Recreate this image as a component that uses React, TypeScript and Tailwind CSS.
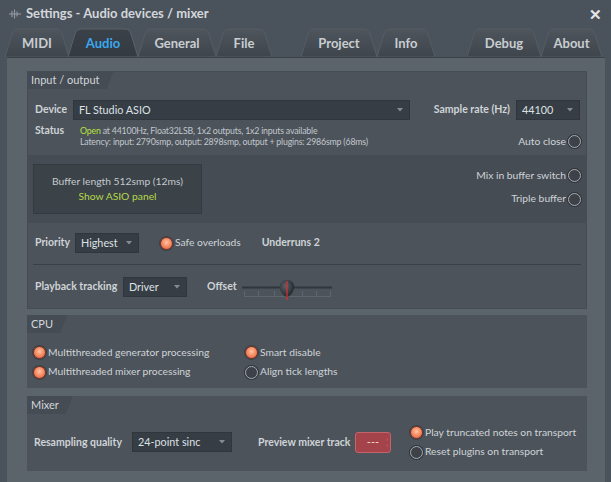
import React from "react";

const font = { fontFamily: "Lato, 'Noto Sans', sans-serif" };

function Tab({ label, w, active }: { label: string; w: number; active?: boolean }) {
  const h = 29;
  const d = `M0,${h} L7,6 Q8.5,1 13,1 L${w - 13},1 Q${w - 8.5},1 ${w - 7},6 L${w},${h} Z`;
  return (
    <div className="relative flex h-[29px] shrink-0 items-center justify-center" style={{ width: w }}>
      <svg className="absolute inset-0" width={w} height={h}>
        <defs>
          <linearGradient id={`g${label}`} x1="0" y1="0" x2="0" y2="1">
            <stop offset="0" stopColor={active ? "#3a4148" : "#4e555d"} />
            <stop offset="1" stopColor={active ? "#333a41" : "#3e454c"} />
          </linearGradient>
        </defs>
        <path d={d} fill={`url(#g${label})`} stroke={active ? "#5a626a" : "#555c64"} strokeWidth="1" />
      </svg>
      <span
        className={`relative mt-[2px] text-[13px] font-bold ${active ? "text-[#3aa8f0]" : "text-[#c9cdd1]"}`}
      >
        {label}
      </span>
    </div>
  );
}

function Radio({ on }: { on?: boolean }) {
  return on ? (
    <span className="inline-block h-[13px] w-[13px] shrink-0 rounded-full border border-[#7a3428] bg-[radial-gradient(circle_at_50%_40%,#ffc4a0_0%,#f58a62_50%,#d5593e_100%)] shadow-[0_0_0_1px_#3c4248]" />
  ) : (
    <span className="inline-block h-[13px] w-[13px] shrink-0 rounded-full border-[1.5px] border-[#a6acb2] bg-[#3c4248] shadow-[0_0_0_1px_#30353a]" />
  );
}

function Select({ text, className }: { text: string; className: string }) {
  return (
    <div
      className={`flex h-[20px] shrink-0 items-center justify-between border border-[#30363c] bg-[#363d44] pl-[5px] pr-[6px] text-[10.8px] text-[#dde1e4] ${className}`}
    >
      <span>{text}</span>
      <svg width="6" height="4" viewBox="0 0 6 4">
        <path d="M0,0 L6,0 L3,3.5 Z" fill="#858c93" />
      </svg>
    </div>
  );
}

function Header({ label }: { label: string }) {
  return (
    <div className="flex h-[18px] w-fit items-center bg-[#454c54] pl-[4px] pr-[14px] text-[11px] text-[#d2d6da] [clip-path:polygon(0_0,100%_0,calc(100%-7px)_100%,0_100%)]">
      {label}
    </div>
  );
}

function Slider() {
  const ticks = [0, 14, 30, 44, 58, 72, 86];
  return (
    <svg width="92" height="24" viewBox="0 0 92 24" className="shrink-0">
      <line x1="0" y1="9.5" x2="90" y2="9.5" stroke="#30363b" strokeWidth="2" />
      <line x1="2" y1="18.5" x2="88" y2="18.5" stroke="#5d656d" strokeWidth="1" />
      {ticks.map((t) => (
        <line key={t} x1={t + 2.5} y1="13" x2={t + 2.5} y2="19" stroke="#5d656d" strokeWidth="1" />
      ))}
      <defs>
        <radialGradient id="knob" cx="0.4" cy="0.35" r="0.7">
          <stop offset="0" stopColor="#5a6168" />
          <stop offset="1" stopColor="#1f2327" />
        </radialGradient>
      </defs>
      <path d="M45,2 C51,2 53,7 52,11 C51,15 48,18 45,19 C42,18 39,15 38,11 C37,7 39,2 45,2 Z" fill="url(#knob)" />
      <line x1="45" y1="3" x2="45" y2="22" stroke="#e03030" strokeWidth="1.2" />
    </svg>
  );
}

const lbl = "text-[10.5px] font-bold text-[#cfd3d7]";
const txt = "text-[10.3px] text-[#cfd3d7]";

export default function App() {
  return (
    <div className="h-[482px] w-[611px] overflow-hidden bg-[#4a525b]" style={font}>
      {/* Title bar */}
      <div className="flex h-[28px] items-center pl-[8px] pr-[9px]">
        <svg width="14" height="10" viewBox="0 0 14 10" className="mr-[4px]">
          <g stroke="#8e959c" strokeWidth="1.2">
            <line x1="1" y1="5" x2="13" y2="5" />
            <line x1="4" y1="2" x2="4" y2="8" />
            <line x1="6.5" y1="0.5" x2="6.5" y2="9.5" />
            <line x1="9" y1="2.5" x2="9" y2="7.5" />
          </g>
        </svg>
        <span className="text-[13px] font-bold text-[#d3d7db]">Settings - Audio devices / mixer</span>
        <span className="ml-auto mt-[1px] text-[15px] font-bold leading-none text-[#e4e7ea]">✕</span>
      </div>

      {/* Tabs */}
      <div className="flex h-[29px] items-end pl-[5px]">
        <Tab label="MIDI" w={64} />
        <div className="-ml-[1px]">
          <Tab label="Audio" w={70} active />
        </div>
        <Tab label="General" w={78} />
        <Tab label="File" w={56} />
        <div className="w-[29px] shrink-0" />
        <Tab label="Project" w={76} />
        <Tab label="Info" w={58} />
        <div className="w-[32px] shrink-0" />
        <Tab label="Debug" w={74} />
        <Tab label="About" w={61} />
      </div>

      {/* Content */}
      <div className="ml-[7px] h-[425px] w-[598px] border-t border-[#3a4148] bg-[#5b636b] pl-[20px] pr-[18px] pt-[13px]">
        {/* Input / output */}
        <div className="h-[238px] bg-[#4c535b] shadow-[inset_0_0_0_1px_#454c54]">
          <Header label="Input / output" />
          <div className="mt-[11px] flex h-[20px] items-center pl-[8px] pr-[7px]">
            <span className={`w-[38px] ${lbl}`}>Device</span>
            <Select text="FL Studio ASIO" className="w-[337px]" />
            <span className={`ml-auto mr-[6px] ${lbl}`}>Sample rate (Hz)</span>
            <Select text="44100" className="w-[64px]" />
          </div>
          <div className="mt-[5px] flex h-[24px] pl-[8px] pr-[6px]">
            <span className={`w-[45px] leading-[11px] ${lbl}`}>Status</span>
            <div className="text-[8.8px] leading-[11px] tracking-[-0.2px] text-[#c2c7cc]">
              <div>
                <span className="text-[#b7e03e]">Open</span> at 44100Hz, Float32LSB, 1x2 outputs, 1x2 inputs available
              </div>
              <div>Latency: input: 2790smp, output: 2898smp, output + plugins: 2986smp (68ms)</div>
            </div>
            <div className="ml-auto flex items-end">
              <div className="flex items-center gap-[2px]">
                <span className={txt}>Auto close</span>
                <Radio />
              </div>
            </div>
          </div>
          <div className="mt-[6px] flex h-[68px] bg-[#454c54] pl-[6px] pr-[6px] pt-[9px]">
            <div className="flex h-[50px] w-[169px] flex-col items-center justify-center border border-[#343a40] bg-[#3b4248] text-[10.3px] leading-[15px]">
              <span className="text-[#c4c9ce]">Buffer length 512smp (12ms)</span>
              <span className="text-[#b5d94a]">Show ASIO panel</span>
            </div>
            <div className="ml-auto flex flex-col items-end gap-[8px] pt-[4px]">
              <div className="flex items-center gap-[2px]">
                <span className={txt}>Mix in buffer switch</span>
                <Radio />
              </div>
              <div className="flex items-center gap-[2px]">
                <span className={txt}>Triple buffer</span>
                <Radio />
              </div>
            </div>
          </div>
          <div className="mt-[10px] flex h-[20px] items-center pl-[8px]">
            <span className={`w-[40px] ${lbl}`}>Priority</span>
            <Select text="Highest" className="w-[64px]" />
            <div className="ml-[21px] flex items-center gap-[2px]">
              <Radio on />
              <span className={txt}>Safe overloads</span>
            </div>
            <span className={`ml-[21px] ${lbl}`}>Underruns 2</span>
          </div>
          <div className="ml-[6px] mr-[6px] mt-[11px] h-[1px] bg-[#3a4047]" />
          <div className="mt-[12px] flex h-[20px] items-center pl-[8px]">
            <span className={`w-[88px] ${lbl}`}>Playback tracking</span>
            <Select text="Driver" className="w-[64px]" />
            <span className={`ml-[20px] w-[35px] ${lbl}`}>Offset</span>
            <div className="mt-[5px]">
              <Slider />
            </div>
          </div>
        </div>

        {/* CPU */}
        <div className="mt-[6px] h-[73px] bg-[#4c535b]">
          <Header label="CPU" />
          <div className={`mt-[12px] grid grid-cols-[212px_auto] gap-y-[4px] pl-[6px] ${txt}`}>
            <div className="flex items-center gap-[2px]">
              <Radio on />
              <span>Multithreaded generator processing</span>
            </div>
            <div className="flex items-center gap-[2px]">
              <Radio on />
              <span>Smart disable</span>
            </div>
            <div className="flex items-center gap-[2px]">
              <Radio on />
              <span>Multithreaded mixer processing</span>
            </div>
            <div className="flex items-center gap-[2px]">
              <Radio />
              <span>Align tick lengths</span>
            </div>
          </div>
        </div>

        {/* Mixer */}
        <div className="mt-[8px] h-[75px] bg-[#4c535b]">
          <Header label="Mixer" />
          <div className="mt-[11px] flex items-center pl-[7px]">
            <span className={`w-[98px] ${lbl}`}>Resampling quality</span>
            <Select text="24-point sinc" className="w-[100px]" />
            <span className={`ml-[26px] w-[97px] ${lbl}`}>Preview mixer track</span>
            <div className="relative flex h-[21px] w-[36px] items-center justify-center rounded-[3px] border border-[#c4646a] bg-[#a4434a] text-[11px] text-[#f0d8d8]">
              <span>---</span>
              <span className="absolute right-[2px] top-[3px] text-[6px] leading-[6px] text-[#d08086]">›<br />‹</span>
            </div>
            <div className={`ml-[19px] flex flex-col gap-[4px] ${txt}`}>
              <div className="flex items-center gap-[2px]">
                <Radio on />
                <span>Play truncated notes on transport</span>
              </div>
              <div className="flex items-center gap-[2px]">
                <Radio />
                <span>Reset plugins on transport</span>
              </div>
            </div>
          </div>
        </div>
      </div>
    </div>
  );
}
